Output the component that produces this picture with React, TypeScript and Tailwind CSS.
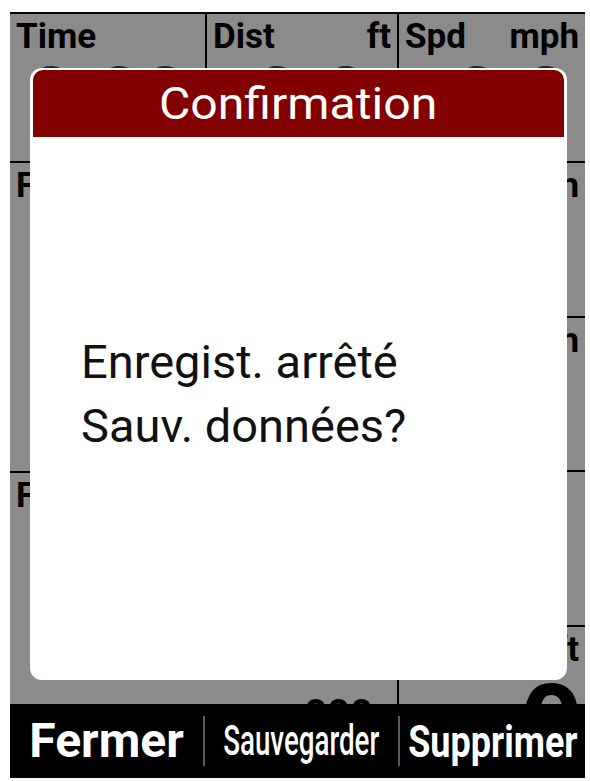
import React from "react";

const font = { fontFamily: "Roboto, 'Noto Sans', sans-serif" };

function Label({ left, right }: { left: string; right?: string }) {
  return (
    <div className="flex justify-between px-[6px] pt-[3px] text-[35px] font-bold leading-[40px] text-black whitespace-nowrap">
      <span>{left}</span>
      {right && <span>{right}</span>}
    </div>
  );
}

export default function App() {
  return (
    <div className="relative w-[590px] h-[781px] bg-white overflow-hidden" style={font}>
      {/* device screen */}
      <div className="ml-[10px] mt-[12px] w-[575px] h-[766px] bg-[#8b8b8b] flex flex-col">
        {/* top row */}
        <div className="h-[151px] flex border-t-2 border-black">
          <div className="w-[195px] shrink-0 flex flex-col overflow-hidden">
            <Label left="Time" />
            <div className="pl-[18px] text-[80px] font-bold leading-none -mt-[1px] whitespace-nowrap text-[#222]">0:00:00</div>
          </div>
          <div className="w-[192px] shrink-0 flex flex-col border-l-2 border-black overflow-hidden">
            <Label left="Dist" right="ft" />
            <div className="pr-[28px] text-right text-[80px] font-bold leading-none -mt-[1px] text-[#222]">0.0</div>
          </div>
          <div className="flex-1 min-w-0 flex flex-col border-l-2 border-black overflow-hidden">
            <Label left="Spd" right="mph" />
            <div className="pr-[16px] text-right text-[80px] font-bold leading-none -mt-[1px] text-[#222]">0.0</div>
          </div>
        </div>

        {/* lower rows */}
        <div className="flex-1 flex">
          <div className="w-[387px] shrink-0 flex flex-col">
            <div className="h-[310px] border-t-2 border-black flex flex-col justify-between overflow-hidden">
              <Label left="FC" right="bpm" />
            </div>
            <div className="flex-1 border-t-2 border-black flex flex-col justify-between overflow-hidden">
              <Label left="Foulée" right="spm" />
              <div className="pr-[24px] text-right text-[40px] font-bold leading-none -mb-[31px]">000</div>
            </div>
          </div>
          <div className="flex-1 min-w-0 flex flex-col border-l-2 border-black">
            <div className="h-[155px] border-t-2 border-black overflow-hidden">
              <Label left="Vmax" right="mph" />
            </div>
            <div className="h-[154px] border-t-2 border-black overflow-hidden">
              <Label left="Vmoy" right="mph" />
            </div>
            <div className="h-[155px] border-t-2 border-black overflow-hidden">
              <Label left="Cal" />
            </div>
            <div className="flex-1 border-t-2 border-black flex flex-col justify-between overflow-hidden">
              <Label left="Alt" right="ft" />
              <div className="pr-[2px] text-right text-[110px] font-bold leading-none -mb-[76px]">0</div>
            </div>
          </div>
        </div>

        {/* soft keys */}
        <div className="h-[75px] bg-black flex items-center text-white whitespace-nowrap">
          <div className="w-[193px] shrink-0 flex justify-center">
            <span className="text-[48px] font-bold leading-none">Fermer</span>
          </div>
          <div className="w-[2px] h-[50px] shrink-0 bg-[#5a5a5a]" />
          <div className="w-[193px] shrink-0 flex justify-center">
            <span className="inline-block scale-x-[0.66] text-[42px] font-medium leading-none">Sauvegarder</span>
          </div>
          <div className="w-[2px] h-[50px] shrink-0 bg-[#5a5a5a]" />
          <div className="w-[185px] shrink-0 flex justify-center">
            <span className="inline-block scale-x-[0.8] text-[45px] font-bold leading-none">Supprimer</span>
          </div>
        </div>
      </div>

      {/* confirmation dialog */}
      <div className="absolute left-[30px] top-[68px] w-[537px] h-[612px] bg-white rounded-[12px] px-[3px] pt-[2px] flex flex-col">
        <div className="h-[67px] bg-[#820000] rounded-t-[10px] flex items-center justify-center">
          <span className="inline-block scale-x-[1.07] text-white text-[45px] leading-none">Confirmation</span>
        </div>
        <div className="flex-1 flex items-center pl-[48px] pb-[30px]">
          <div className="text-[47px] leading-[64px] text-[#111] whitespace-nowrap">
            <div>Enregist. arrêté</div>
            <div>Sauv. données?</div>
          </div>
        </div>
      </div>
    </div>
  );
}
